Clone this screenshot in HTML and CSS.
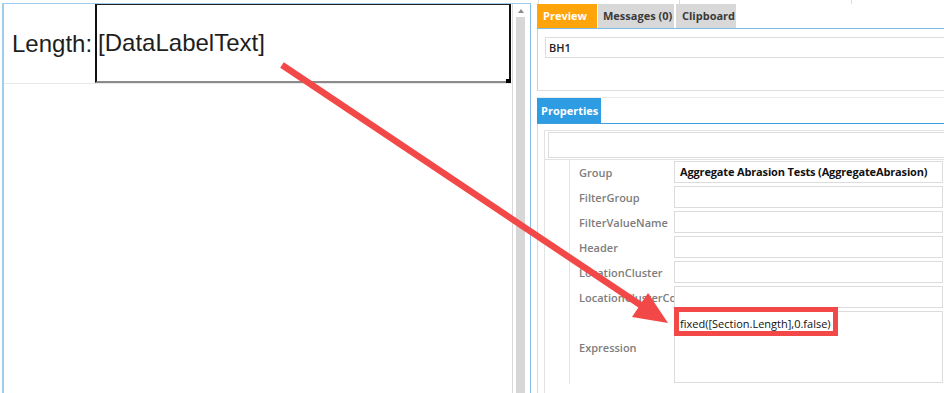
FILE: index.html
```html
<!DOCTYPE html>
<html>
<head>
<meta charset="utf-8">
<link rel="stylesheet" href="styles.css">
</head>
<body>
<div class="app">
  <section class="designer">
    <div class="surface">
      <div class="band">
        <span class="band-label">Length:</span>
        <div class="data-label">[DataLabelText]<span class="handle"></span></div>
      </div>
    </div>
    <div class="vscroll">
      <span class="vs-arrow"></span>
      <div class="vs-track"></div>
    </div>
  </section>
  <section class="side">
    <div class="topstrip"><span class="ts ts-a"></span><span class="ts ts-b"></span><span class="ts ts-c"></span></div>
    <div class="tabs">
      <span class="tab tab-preview active">Preview</span>
      <span class="tab tab-messages">Messages (0)</span>
      <span class="tab tab-clipboard">Clipboard</span>
    </div>
    <div class="preview"><div class="preview-box">BH1</div></div>
    <div class="ptabs"><span class="ptab">Properties</span></div>
    <div class="pbody">
      <div class="pgrid">
        <div class="search"></div>
        <div class="rows">
          <div class="cat"></div>
          <div class="props">
            <div class="row"><span class="lbl">Group</span><span class="val bold">Aggregate Abrasion Tests (AggregateAbrasion)</span></div>
            <div class="row"><span class="lbl">FilterGroup</span><span class="val"></span></div>
            <div class="row"><span class="lbl">FilterValueName</span><span class="val"></span></div>
            <div class="row"><span class="lbl">Header</span><span class="val"></span></div>
            <div class="row"><span class="lbl">LocationCluster</span><span class="val"></span></div>
            <div class="row"><span class="lbl">LocationClusterCode</span><span class="val"></span></div>
            <div class="row row-tall"><span class="lbl">Expression</span><span class="val val-multi">fixed([Section.Length],0.false)</span></div>
          </div>
        </div>
      </div>
    </div>
  </section>
</div>
<div class="callout"></div>
<svg class="arrow" width="944" height="393" viewBox="0 0 944 393" xmlns="http://www.w3.org/2000/svg">
  <line x1="282" y1="65" x2="642" y2="306" stroke="#f34848" stroke-width="6.5"/>
  <polygon points="668,323 632,317 648,293" fill="#f34848"/>
</svg>
</body>
</html>
```

FILE: styles.css
```css
html, body {
  margin: 0;
  padding: 0;
}

body {
  width: 944px;
  height: 393px;
  overflow: hidden;
  position: relative;
  background: #ffffff;
  font-family: "Open Sans", "Noto Sans", sans-serif;
  color: #222;
}

.app {
  display: flex;
  height: 393px;
}

/* ---------- report designer (left) ---------- */
.designer {
  box-sizing: border-box;
  width: 529px;
  margin-left: 2px;
  margin-top: 3px;
  border-left: 2px solid #9fcdee;
  border-top: 1px solid #9fcdee;
  border-right: 1px solid #86bde8;
  display: flex;
}

.surface {
  box-sizing: border-box;
  width: 509px;
  border-right: 1px solid #d9d9d9;
}

.band {
  height: 79px;
  display: flex;
  border-bottom: 1px solid #e9e9e9;
}

.band-label {
  font-family: "Liberation Sans", Arial, sans-serif;
  font-size: 24px;
  color: #1e1e1e;
  padding-left: 8px;
  display: flex;
  align-items: center;
}

.data-label {
  position: relative;
  box-sizing: border-box;
  flex: 1;
  margin-left: 3px;
  margin-right: 1px;
  padding-left: 1px;
  border-top: 1px solid #222;
  border-left: 2px solid #111;
  border-right: 2px solid #111;
  border-bottom: 2px solid #8a8a8a;
  font-family: "Liberation Sans", Arial, sans-serif;
  font-size: 24px;
  color: #1e1e1e;
  display: flex;
  align-items: center;
}

.handle {
  position: absolute;
  right: -2px;
  bottom: -2px;
  width: 5px;
  height: 4px;
  background: #000;
}

.vscroll {
  flex: 1;
  display: flex;
  flex-direction: column;
  padding: 5px 0 0 3px;
}

.vs-arrow {
  display: block;
  width: 0;
  height: 0;
  margin-left: 2px;
  border-left: 3px solid transparent;
  border-right: 3px solid transparent;
  border-bottom: 4px solid #8c8c8c;
}

.vs-track {
  flex: 1;
  width: 9px;
  margin-top: 4px;
  background: #d7d7d7;
}

/* ---------- side panel (right) ---------- */
.side {
  flex: 1;
  margin-left: 6px;
  display: flex;
  flex-direction: column;
  min-width: 0;
}

.topstrip {
  height: 4px;
  display: flex;
}

.ts {
  display: block;
  height: 4px;
  border-left: 1px solid #dcdcdc;
}

.ts-a { margin-left: 1px; width: 140px; }
.ts-b { width: 171px; }
.ts-c { width: 40px; }

.tabs {
  display: flex;
  gap: 1px;
  height: 24px;
  border-bottom: 1px solid #7dbbe9;
}

.tab {
  box-sizing: border-box;
  padding-left: 6px;
  font-size: 11px;
  font-weight: 700;
  line-height: 24px;
  color: #3a3a3a;
  background: #d8d8d8;
  white-space: nowrap;
}

.tab-preview { width: 60px; }
.tab-messages { width: 76px; padding-left: 5px; }
.tab-clipboard { width: 60px; margin-left: 1px; }

.tab.active {
  background: #ffa40a;
  color: #ffffff;
}

.preview {
  box-sizing: border-box;
  height: 62px;
  border-left: 1px solid #b3d6f0;
  border-bottom: 1px solid #dedede;
  padding: 8px 0 0 7px;
}

.preview-box {
  height: 21px;
  box-sizing: border-box;
  border: 1px solid #dcdcdc;
  border-right: none;
  padding-left: 3px;
  font-size: 11px;
  font-weight: 600;
  line-height: 19px;
  color: #222;
}

.ptabs {
  margin-top: 6px;
  border-top: 1px solid #ececec;
  height: 25px;
  border-bottom: 1px solid #3d9fe2;
  display: flex;
}

.ptab {
  width: 64px;
  box-sizing: border-box;
  padding-left: 4px;
  background: #2e9ce2;
  color: #ffffff;
  font-size: 11px;
  font-weight: 700;
  line-height: 25px;
}

.pbody {
  flex: 1;
  border-left: 1px solid #c8dff1;
  padding: 6px 0 0 6px;
  display: flex;
  flex-direction: column;
}

.pgrid {
  flex: 1;
  border-left: 1px solid #e3e3e3;
  border-top: 1px solid #e3e3e3;
}

.search {
  height: 26px;
  box-sizing: border-box;
  margin: 1px 0 0 3px;
  border: 1px solid #dedede;
  border-right: none;
}

.rows {
  margin-top: 1px;
  border-top: 1px solid #e3e3e3;
  display: flex;
}

.cat {
  width: 24px;
  border-right: 1px solid #e3e3e3;
}

.props {
  flex: 1;
  display: flex;
  flex-direction: column;
  gap: 3px;
  padding: 1px 0 1px 0;
}

.row {
  display: flex;
  height: 22px;
}

.row-tall {
  height: 72px;
}

.lbl {
  width: 104px;
  flex: none;
  box-sizing: border-box;
  padding-left: 9px;
  overflow: hidden;
  white-space: nowrap;
  font-size: 11px;
  font-weight: 600;
  color: #7d7d7d;
  align-self: center;
}

.val {
  flex: 1;
  box-sizing: border-box;
  margin-right: 1px;
  border: 1px solid #dcdcdc;
  padding-left: 5px;
  font-size: 11px;
  line-height: 20px;
  color: #111;
  white-space: nowrap;
  overflow: hidden;
}

.val.bold {
  font-weight: 700;
  letter-spacing: -0.15px;
}

.val-multi {
  padding-top: 4px;
  line-height: 16px;
}

/* ---------- annotation overlay ---------- */
.callout {
  position: absolute;
  left: 674px;
  top: 307px;
  width: 164px;
  height: 29px;
  box-sizing: border-box;
  border: 5px solid #f34848;
}

.arrow {
  position: absolute;
  left: 0;
  top: 0;
  pointer-events: none;
}
```
